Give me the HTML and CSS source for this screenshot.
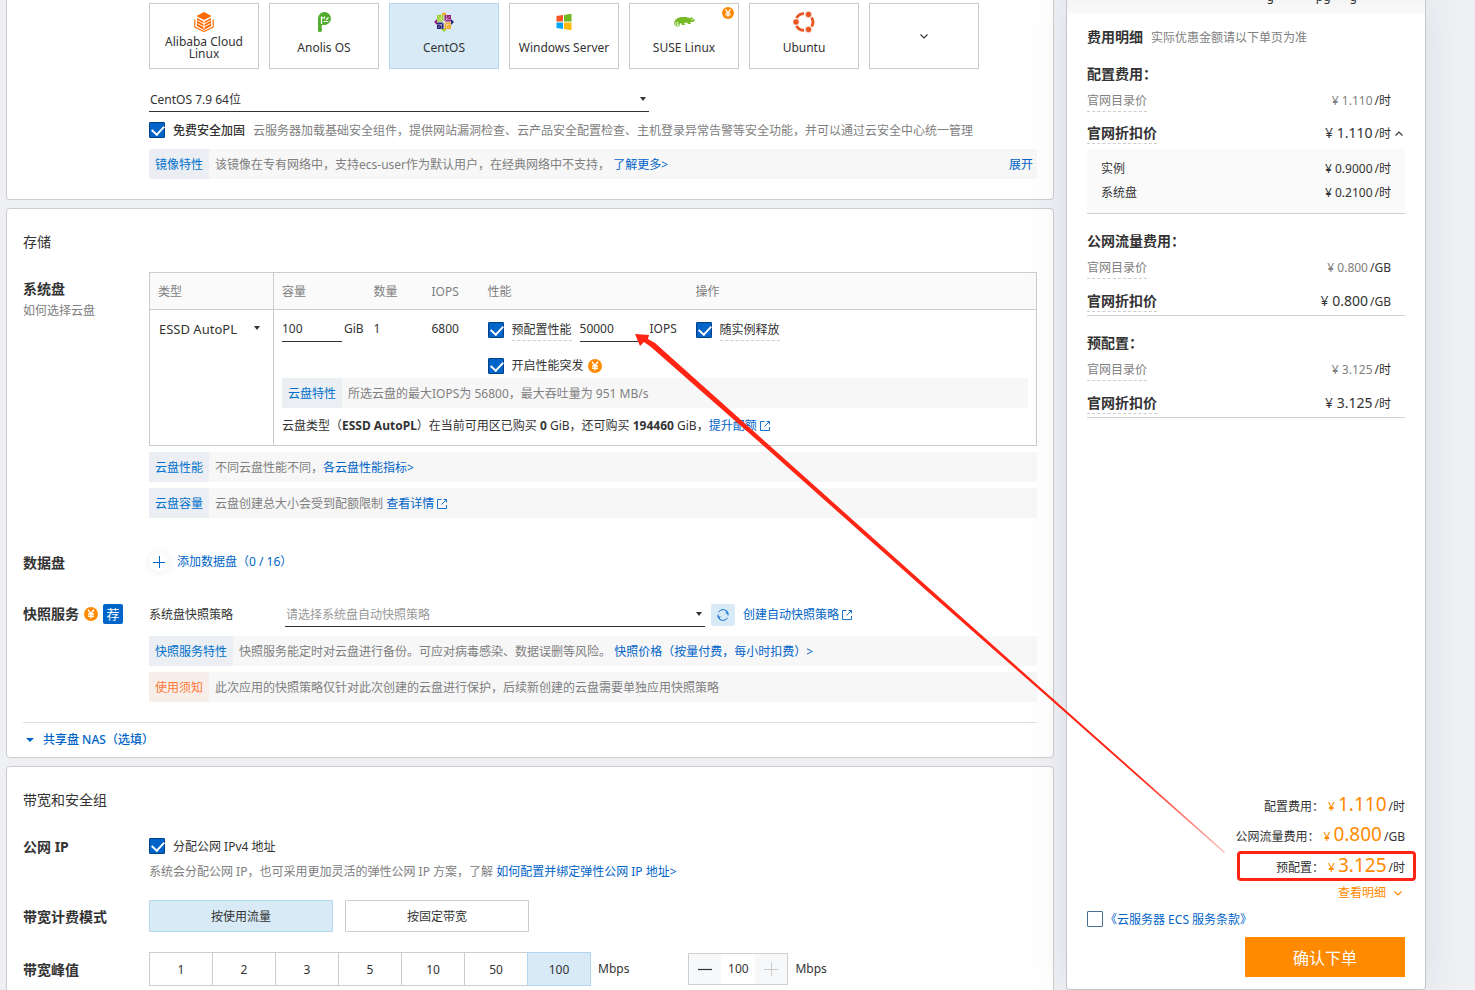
FILE: index.html
```html
<!DOCTYPE html>
<html lang="zh-CN">
<head>
<meta charset="utf-8">
<title>云服务器 ECS 购买</title>
<link rel="stylesheet" href="styles.css">
</head>
<body>
<svg class="sprite" aria-hidden="true">
  <symbol id="ext" viewBox="0 0 12 12"><path d="M5.5 1.5H1.500V10.500H10.500V7M7.500 1.500H10.500V4.500M10.500 1.500L5.500 6.500" fill="none" stroke="currentColor" stroke-width=".9"/></symbol>
  <symbol id="yen" viewBox="0 0 14 14"><circle cx="7" cy="7" r="7" fill="#ff8a00"/><path d="M4 2.800L7 6.500L10 2.800M7 6.500V11.500M4 7H10M4 9.200H10" fill="none" stroke="#fff" stroke-width="1.400"/></symbol>
  <symbol id="down" viewBox="0 0 10 10"><path d="M1.500 3.500L5 7L8.500 3.500" fill="none" stroke="currentColor" stroke-width="1.100"/></symbol>
</svg>
<div class="layout">
  <main class="main">
    <section class="card card-image">
      <div class="row">
        <div class="label"></div>
        <div class="field">
          <div class="tiles">
            <button class="tile" type="button"><svg class="logo" viewBox="0 0 20 20"><path d="M10 0L17.500 4L10 8L2.500 4Z" fill="#ff6a00"/><path d="M3 6L10 9.700L17 6V14L10 18L3 14Z" fill="#ff6a00"/><path d="M3.500 8.500L10 12L16.500 8.500M3.500 11.500L10 15L16.500 11.500M10 9V17" stroke="#fff" fill="none"/><path d="M.8 7.500V15L10 19.500L19.200 15V7.500" fill="none" stroke="#ff7a1c" stroke-width="1.300"/></svg><span>Alibaba Cloud Linux</span></button>
            <button class="tile" type="button"><svg class="logo" viewBox="0 0 20 20"><path d="M4 19V6.500A6.500 6.500 0 1 1 10.500 13H7.700V17A2 2 0 0 1 4 19Z" fill="#52ac2f"/><path d="M7.500 12V4.500M7.500 5L9.500 6.500M10.500 4.500V6.500M9.500 9.500H14.500M12 8L14.500 5.500" fill="none" stroke="#fff" stroke-width="1.200"/></svg><span>Anolis OS</span></button>
            <button class="tile on" type="button"><svg class="logo" viewBox="0 0 20 20"><path d="M10 0L13 3H7Z" fill="#efa724"/><path d="M20 10L17 13V7Z" fill="#262577"/><path d="M10 20L7 17H13Z" fill="#9ccd2a"/><path d="M0 10L3 7V13Z" fill="#932279"/><path d="M3 3H9.500V9.500H3Z" fill="#9ccd2a"/><path d="M10.500 3H17V9.500H10.500Z" fill="#932279"/><path d="M3 10.500H9.500V17H3Z" fill="#262577"/><path d="M10.500 10.500H17V17H10.500Z" fill="#efa724"/><path d="M4 4L16 16M16 4L4 16M7.500 3V7.500H3M12.500 3V7.500H17M7.500 17V12.500H3M12.500 17V12.500H17" fill="none" stroke="#fff" stroke-width=".7" opacity=".6"/></svg><span>CentOS</span></button>
            <button class="tile" type="button"><svg class="logo" viewBox="0 0 20 20"><path d="M2.500 4L9 3V9.500H2.500Z" fill="#f35325"/><path d="M10 3L17.500 1.800V9.500H10Z" fill="#70b61e"/><path d="M2.500 10.500H9V17L2.500 16Z" fill="#05a6f0"/><path d="M10 10.500H17.500V18.200L10 17Z" fill="#ffba08"/></svg><span>Windows Server</span></button>
            <button class="tile" type="button"><svg class="logo wide" viewBox="0 0 22 20"><path d="M1 12C1 7 6 4.500 11 5C14 5 16 5.500 17 6.500L18 5L21.500 7.500C22 9 21 10 19 10H17L18 12H15L14 10.500L11 11L12 13H9L8 11C7 11 7 12 7 13C6 16 1.500 15.500 1 12Z" fill="#73ba25"/><path d="M6 12.500A2 2 0 1 1 3.500 10.500A1.200 1.200 0 1 1 4 12.800" fill="none" stroke="#fff"/><circle cx="19" cy="7.500" r=".7" fill="#fff"/></svg><span>SUSE Linux</span><svg class="tile-badge"><use href="#yen"/></svg></button>
            <button class="tile" type="button"><svg class="logo big" viewBox="0 0 22 22"><g fill="none" stroke="#e95420" stroke-width="2.800"><path d="M3.500 7A8.500 8.500 0 0 1 11 2.600"/><path d="M3.500 15A8.500 8.500 0 0 0 11 19.400"/><path d="M18.600 6.500A8.500 8.500 0 0 1 18.600 15.500"/></g><g fill="#e95420" stroke="#fff" stroke-width=".7"><circle cx="3" cy="11" r="3.200"/><circle cx="15.500" cy="3.500" r="3.200"/><circle cx="15.500" cy="18.500" r="3.200"/></g></svg><span>Ubuntu</span></button>
            <button class="tile more" type="button" aria-label="更多"><svg class="chev"><use href="#down"/></svg></button>
          </div>
          <div class="pick pick-image"><select aria-label="镜像版本"><option>CentOS 7.9 64位</option></select></div>
          <div class="check-line"><input type="checkbox" id="harden" checked><label for="harden">免费安全加固</label><span class="muted">云服务器加载基础安全组件，提供网站漏洞检查、云产品安全配置检查、主机登录异常告警等安全功能，并可以通过云安全中心统一管理</span></div>
          <div class="notice"><span class="tag">镜像特性</span><p>该镜像在专有网络中，支持ecs-user作为默认用户，在经典网络中不支持， <a href="#">了解更多&gt;</a></p><a class="expand" href="#">展开</a></div>
        </div>
      </div>
    </section>

    <section class="card card-storage">
      <h2>存储</h2>
      <div class="row">
        <div class="label label-disk"><b>系统盘</b><a class="hint" href="#">如何选择云盘</a></div>
        <div class="field">
          <table class="disks">
            <colgroup><col class="c-type"><col class="c-size"><col class="c-count"><col class="c-iops"><col class="c-perf"><col></colgroup>
            <thead><tr><th class="type">类型</th><th>容量</th><th>数量</th><th>IOPS</th><th>性能</th><th>操作</th></tr></thead>
            <tbody>
              <tr>
                <td class="type" rowspan="2"><div class="pick pick-type"><select aria-label="类型"><option>ESSD AutoPL</option></select></div></td>
                <td><div class="cell"><input class="num" type="text" value="100" aria-label="容量"><span>GiB</span></div></td>
                <td><div class="cell">1</div></td>
                <td><div class="cell">6800</div></td>
                <td>
                  <div class="cell"><input type="checkbox" id="prov" checked><label class="dash" for="prov">预配置性能</label><input class="num wide" type="text" value="50000" aria-label="预配置 IOPS"><span>IOPS</span></div>
                  <div class="cell"><input type="checkbox" id="burst" checked><label for="burst">开启性能突发</label><svg class="yen"><use href="#yen"/></svg></div>
                </td>
                <td><div class="cell"><input type="checkbox" id="rel" checked><label class="dash" for="rel">随实例释放</label></div></td>
              </tr>
              <tr><td colspan="5">
                <div class="notice"><span class="tag">云盘特性</span><p>所选云盘的最大IOPS为 56800，最大吞吐量为 951 MB/s</p></div>
                <p class="quota">云盘类型（<b>ESSD AutoPL</b>）在当前可用区已购买 <b>0</b> GiB，还可购买 <b>194460</b> GiB，<a href="#">提升配额<svg class="ext"><use href="#ext"/></svg></a></p>
              </td></tr>
            </tbody>
          </table>
          <div class="notice"><span class="tag">云盘性能</span><p>不同云盘性能不同，<a href="#">各云盘性能指标&gt;</a></p></div>
          <div class="notice"><span class="tag">云盘容量</span><p>云盘创建总大小会受到配额限制 <a href="#">查看详情<svg class="ext"><use href="#ext"/></svg></a></p></div>
        </div>
      </div>
      <div class="row row-data">
        <div class="label"><b>数据盘</b></div>
        <div class="field"><button class="add" type="button"><span class="plus"></span>添加数据盘（0 / 16）</button></div>
      </div>
      <div class="row row-snap">
        <div class="label inline"><b>快照服务</b><svg class="yen"><use href="#yen"/></svg><span class="rec">荐</span></div>
        <div class="field">
          <div class="snap">
            <label class="snap-label" for="policy">系统盘快照策略</label>
            <div class="pick pick-policy"><select id="policy"><option>请选择系统盘自动快照策略</option></select></div>
            <button class="refresh" type="button" aria-label="刷新"><svg viewBox="0 0 14 14"><path d="M2 9A5.200 5.200 0 0 0 11.500 9.700M12 5A5.200 5.200 0 0 0 2.500 4.300M2 6.500V9H4.500M12 7.500V5H9.500M2 9L4 11M12 5L10 3" fill="none" stroke="#0a6bd0"/></svg></button>
            <a href="#">创建自动快照策略<svg class="ext"><use href="#ext"/></svg></a>
          </div>
          <div class="notice"><span class="tag">快照服务特性</span><p>快照服务能定时对云盘进行备份。可应对病毒感染、数据误删等风险。 <a href="#">快照价格（按量付费，每小时扣费）&gt;</a></p></div>
          <div class="notice warn"><span class="tag">使用须知</span><p>此次应用的快照策略仅针对此次创建的云盘进行保护，后续新创建的云盘需要单独应用快照策略</p></div>
        </div>
      </div>
      <button class="nas" type="button">共享盘 NAS（选填）</button>
    </section>

    <section class="card card-net">
      <h2>带宽和安全组</h2>
      <div class="row">
        <div class="label"><b>公网 IP</b></div>
        <div class="field">
          <div class="check-line"><input type="checkbox" id="ipv4" checked><label class="plain" for="ipv4">分配公网 IPv4 地址</label></div>
          <p class="ip-note">系统会分配公网 IP，也可采用更加灵活的弹性公网 IP 方案，了解 <a href="#">如何配置并绑定弹性公网 IP 地址&gt;</a></p>
        </div>
      </div>
      <div class="row row-mode">
        <div class="label"><b>带宽计费模式</b></div>
        <div class="field modes"><button class="mode on" type="button">按使用流量</button><button class="mode" type="button">按固定带宽</button></div>
      </div>
      <div class="row row-peak">
        <div class="label"><b>带宽峰值</b></div>
        <div class="field peak">
          <div class="seg"><button type="button">1</button><button type="button">2</button><button type="button">3</button><button type="button">5</button><button type="button">10</button><button type="button">50</button><button class="on" type="button">100</button></div>
          <span class="unit">Mbps</span>
          <div class="stepper"><button type="button" aria-label="减少"><svg viewBox="0 0 16 16"><path d="M1 8.500H15" stroke="#333" stroke-width="1.200"/></svg></button><input type="text" value="100" aria-label="带宽"><button type="button" aria-label="增加" disabled><svg viewBox="0 0 16 16"><path d="M1 8.500H15M8.500 1V15" stroke="#ccc"/></svg></button></div>
          <span class="unit">Mbps</span>
        </div>
      </div>
    </section>
  </main>

  <aside class="side">
    <div class="side-top"><span>g</span><span>pg</span><span>g</span></div>
    <div class="side-body">
      <h3 class="side-title">费用明细<small>实际优惠金额请以下单页为准</small></h3>
      <div class="group">
        <h4>配置费用：</h4>
        <div class="price list"><span class="dash">官网目录价</span><span><i>¥ 1.110</i>/时</span></div>
        <div class="price deal"><b class="dash">官网折扣价</b><span><i>¥ 1.110</i>/时</span><svg class="up"><use href="#down"/></svg></div>
        <div class="items"><div><span>实例</span><span><i>¥ 0.9000</i>/时</span></div><div><span>系统盘</span><span><i>¥ 0.2100</i>/时</span></div></div>
      </div>
      <div class="group">
        <h4>公网流量费用：</h4>
        <div class="price list"><span class="dash">官网目录价</span><span><i>¥ 0.800</i>/GB</span></div>
        <div class="price deal last"><b class="dash">官网折扣价</b><span><i>¥ 0.800</i>/GB</span></div>
      </div>
      <div class="group">
        <h4>预配置：</h4>
        <div class="price list"><span class="dash">官网目录价</span><span><i>¥ 3.125</i>/时</span></div>
        <div class="price deal last"><b class="dash">官网折扣价</b><span><i>¥ 3.125</i>/时</span></div>
      </div>
    </div>
    <div class="side-foot">
      <div class="sum">配置费用：<em>¥ <strong>1.110</strong></em>/时</div>
      <div class="sum">公网流量费用：<em>¥ <strong>0.800</strong></em>/GB</div>
      <div class="sum boxed">预配置：<em>¥ <strong>3.125</strong></em>/时</div>
      <a class="detail" href="#">查看明细<svg class="chev"><use href="#down"/></svg></a>
      <div class="terms"><input type="checkbox" id="terms"><label for="terms"><a href="#">《云服务器 ECS 服务条款》</a></label></div>
      <button class="submit" type="button">确认下单</button>
    </div>
  </aside>
</div>
<svg class="arrow" width="1475" height="990" viewBox="0 0 1475 990" aria-hidden="true">
  <defs><linearGradient id="fade" gradientUnits="userSpaceOnUse" x1="635" y1="334" x2="1225" y2="853"><stop offset="0" stop-color="#ff2414"/><stop offset=".85" stop-color="#ff2414"/><stop offset="1" stop-color="#ff2414" stop-opacity=".3"/></linearGradient></defs>
  <path d="M635 334L649 335L648 339L655 343L769 445L930 589L1060 705L1225 852L1224 853L1059 707L928 592L766 448L651 347L644 342L640 346Z" fill="url(#fade)"/>
</svg>
</body>
</html>
```
FILE: styles.css
```css
* { box-sizing: border-box; }
body {
  margin: 0;
  background: #eff0f4;
  color: #333;
  font: 12px/20px "Noto Sans", "Noto Sans CJK SC", sans-serif;
}
h2, h3, h4, p { margin: 0; }
a { color: #0064c8; text-decoration: none; }
button, input, select { font: inherit; color: inherit; margin: 0; }
button { cursor: pointer; padding: 0; }
.sprite { position: absolute; width: 0; height: 0; }
.layout { display: flex; height: 100vh; overflow: hidden; padding: 0 49px 0 6px; gap: 12px; }
.main { flex: 1; min-width: 0; display: flex; flex-direction: column; gap: 8px; }
.card { flex: none; background: #fff; border: 1px solid #ccc; border-radius: 4px; padding: 0 16px; }
.card-image { border-top: 0; border-radius: 0 0 4px 4px; padding-top: 3px; padding-bottom: 20px; }
.card-storage { padding-top: 23px; }
.card-net { padding-top: 23px; padding-bottom: 24px; }
.card h2 { font-size: 14px; font-weight: 400; margin-bottom: 20px; }
.row { display: flex; }
.label { flex: none; width: 126px; display: flex; flex-direction: column; font-size: 14px; padding-top: 1px; }
.label-disk { padding-top: 7px; gap: 2px; }
.label.inline { flex-direction: row; align-items: center; align-self: flex-start; gap: 5px; }
.field { flex: 1; min-width: 0; }
.hint { font-size: 12px; color: #808080; }
.muted { color: #808080; }

/* image tiles */
.tiles { display: flex; gap: 10px; }
.tile { position: relative; width: 110px; height: 66px; padding: 8px 8px 0; display: flex; flex-direction: column; align-items: center; border: 1px solid #ccc; background: #fff; line-height: 12px; }
.tile span { flex: 1; display: flex; align-items: center; padding-bottom: 5px; }
.on { background: #d8eaf6 !important; border-color: #b3d5ee !important; }
.logo { width: 20px; height: 20px; flex: none; }
.logo.wide { width: 22px; }
.logo.big { width: 22px; height: 22px; margin: -1px 0; }
.tile-badge { position: absolute; top: 3px; right: 4px; width: 12px; height: 12px; }
.more { padding: 0; justify-content: center; }
.chev { width: 10px; height: 10px; }

/* drop-downs */
.pick { position: relative; border-bottom: 1px solid #333; }
.pick select { appearance: none; display: block; width: 100%; height: 23px; padding: 0 20px 0 1px; border: 0; border-radius: 0; background: none; outline: 0; }
.pick::after { content: ""; position: absolute; right: 3px; top: 9px; border: 3px solid transparent; border-top: 4px solid #333; border-bottom: 0; pointer-events: none; }
.pick-image { width: 500px; margin-top: 19px; }
.pick-type { border: 0; font-size: 13px; margin: 7px 2px 0 0; }
.pick-policy { width: 420px; }
.pick-policy select { color: #999; }

/* check boxes */
input[type=checkbox] { appearance: none; position: relative; flex: none; width: 16px; height: 16px; border: 1px solid #4c6f96; border-radius: 1px; background: #fff; }
input[type=checkbox]:checked { background: #0064c8; border-color: #003f86; }
input[type=checkbox]:checked::after { content: ""; position: absolute; left: 2px; top: 2px; width: 10px; height: 6px; border: solid #fff; border-width: 0 0 2px 2px; transform: rotate(-47deg); }
.check-line { display: flex; align-items: center; gap: 8px; height: 20px; margin-top: 8px; white-space: nowrap; }
.check-line label, .check-line span { padding-top: 2px; }
.check-line label { font-weight: 500; }
.check-line label.plain { font-weight: 400; }
.dash { border-bottom: 1px dashed #ccc; }

/* notices */
.notice { display: flex; margin-top: 6px; height: 30px; line-height: 32px; background: #f7f7f7; color: #808080; white-space: nowrap; }
.notice p { flex: 1; padding-left: 6px; }
.tag { padding: 0 6px; background: #ebeff3; color: #0070cc; }
.warn .tag { background: #f7eee9; color: #ff7733; }
.expand { padding-right: 4px; }
.card-image .notice { margin-top: 9px; }
.ext { width: 12px; height: 12px; margin-left: 2px; vertical-align: -2px; }
.yen { width: 14px; height: 14px; flex: none; }

/* disk table */
.disks { width: 100%; table-layout: fixed; border-collapse: collapse; border: 1px solid #ccc; }
.c-type { width: 124px; }
.c-size { width: 92px; }
.c-count { width: 58px; }
.c-iops { width: 56px; }
.c-perf { width: 208px; }
.disks th { height: 37px; padding: 2px 0 0 8px; text-align: left; font-weight: 400; color: #808080; background: #fafafa; border-bottom: 1px solid #ccc; }
.disks td { padding: 0 8px; vertical-align: top; white-space: nowrap; }
.disks .type { border-right: 1px solid #ccc; }
.disks td .cell { display: flex; align-items: center; gap: 8px; height: 36px; margin-right: -8px; padding-top: 1px; }
.disks td:nth-child(2) .cell { gap: 2px; }
.cell input[type=checkbox], .cell label, .cell .yen { margin-top: 3px; }
.num { width: 60px; height: 27px; padding: 0; border: 0; border-bottom: 1px solid #333; outline: 0; background: none; }
.num.wide { width: 66px; margin-right: -4px; }
.cell .yen { margin-left: -4px; }
.disks .notice { margin-top: -4px; }
.quota { height: 37px; line-height: 36px; }

.row-data { margin-top: 34px; }
.add { display: flex; align-items: center; gap: 8px; border: 0; background: none; color: #0064c8; height: 20px; }
.plus { width: 20px; height: 20px; border-radius: 50%; box-shadow: 0 1px 8px rgba(0,0,0,.08); background: linear-gradient(#0064c8, #0064c8) center/12px 1px no-repeat, linear-gradient(#0064c8, #0064c8) center/1px 12px no-repeat; }
.row-snap { margin-top: 30px; }
.rec { width: 20px; height: 20px; border-radius: 2px; background: #0064c8; color: #fff; font-size: 13px; text-align: center; }
.snap { display: flex; align-items: center; height: 24px; }
.snap-label { width: 136px; }
.refresh { display: flex; align-items: center; justify-content: center; width: 24px; height: 22px; margin: 0 8px 0 6px; border: 0; border-radius: 2px; background: #d8eaf6; }
.refresh svg { width: 14px; height: 14px; }
.row-snap .notice:nth-child(2) { margin-top: 9px; }
.nas { display: flex; align-items: center; gap: 9px; width: 100%; height: 35px; margin-top: 20px; padding-left: 3px; border: 0; border-top: 1px solid #ddd; background: none; color: #0064c8; font-weight: 500; }
.nas::before { content: ""; border: 4px solid transparent; border-top-color: #0064c8; border-bottom: 0; }

/* network */
.card-net .check-line { margin-top: 0; }
.card-net .row:nth-child(2) { margin-top: 26px; }
.ip-note { color: #808080; margin-top: 6px; }
.row-mode { margin-top: 18px; align-items: center; }
.modes { display: flex; gap: 12px; }
.mode { width: 184px; height: 32px; border: 1px solid #ccc; border-radius: 1px; background: #fff; padding-top: 1px; }
.row-peak { margin-top: 20px; align-items: center; }
.peak { display: flex; align-items: center; }
.seg { display: flex; width: 442px; height: 34px; }
.seg button { flex: 1; border: 1px solid #ccc; border-right-width: 0; background: #fff; padding-top: 1px; }
.seg button:last-child { border-right-width: 1px; }
.unit { padding-left: 7px; }
.stepper { display: flex; width: 100px; height: 32px; margin-left: 59px; border: 1px solid #d0d0d0; }
.stepper button { display: flex; align-items: center; justify-content: center; width: 32px; flex: none; border: 0; background: #f7f8fa; }
.stepper svg { width: 16px; height: 16px; }
.stepper input { flex: 1; min-width: 0; border: 0; padding: 0; text-align: center; outline: 0; }

/* price panel */
.side { flex: none; display: flex; flex-direction: column; width: 360px; background: #fff; border: 1px solid #c5c6ca; border-top: 0; border-radius: 0 0 4px 4px; box-shadow: 0 0 40px rgba(60,70,100,.1); }
.side-top { flex: none; height: 14px; overflow: hidden; display: flex; justify-content: flex-end; padding-right: 68px; gap: 19px; line-height: 0; background: linear-gradient(#f5f5f5, #fafafa); }
.side-top span { margin-top: -3px; }
.side-top span:first-child { margin-right: 23px; }
.side-body { flex: 1; padding: 13px 20px 0; }
.side-title { font-size: 14px; font-weight: 700; }
.side-title small { margin-left: 8px; font-size: 12px; font-weight: 400; color: #808080; }
.group { margin-top: 17px; }
.side-title + .group { margin-top: 16px; }
.group h4 { font-size: 14px; }
.price { display: flex; align-items: center; padding-right: 14px; }
.price > :first-child { margin-right: auto; }
.group i { font-style: normal; margin-right: 2px; }
.list { height: 34px; }
.list .dash, .list i { color: #808080; }
.deal { position: relative; height: 31px; }
.deal b { font-size: 14px; }
.deal i { font-size: 14px; }
.deal.last { padding-top: 2px; border-bottom: 1px solid #d0d0d0; }
.up { position: absolute; right: 1px; width: 10px; height: 10px; transform: rotate(180deg); }
.items { padding: 8px 14px; background: #fafafa; border-bottom: 1px solid #d0d0d0; }
.items div { display: flex; justify-content: space-between; line-height: 24px; }
.side-foot { display: flex; flex-direction: column; align-items: flex-end; padding: 0 20px 12px; }
.sum { display: flex; align-items: baseline; justify-content: flex-end; height: 30px; line-height: 26px; }
.sum em { font-style: normal; color: #ff8a00; margin: 0 2px 0 4px; }
.sum strong { font-size: 19px; font-weight: 400; }
.boxed { width: 175px; height: 26px; line-height: 24px; margin: 2px -9px 0 0; padding-right: 9px; outline: 3px solid #ff2414; outline-offset: -1px; border-radius: 2px; }
.detail { display: flex; align-items: center; gap: 7px; margin: 4px 2px 6px 0; color: #ff8a00; }
.terms { display: flex; align-items: center; align-self: stretch; gap: 2px; height: 20px; margin-bottom: 8px; }
.terms label { padding-top: 2px; }
.submit { width: 160px; height: 40px; padding-top: 2px; border: 0; background: #ff8a00; color: #fff; font-size: 16px; }
.arrow { position: absolute; left: 0; top: 0; pointer-events: none; }
```
